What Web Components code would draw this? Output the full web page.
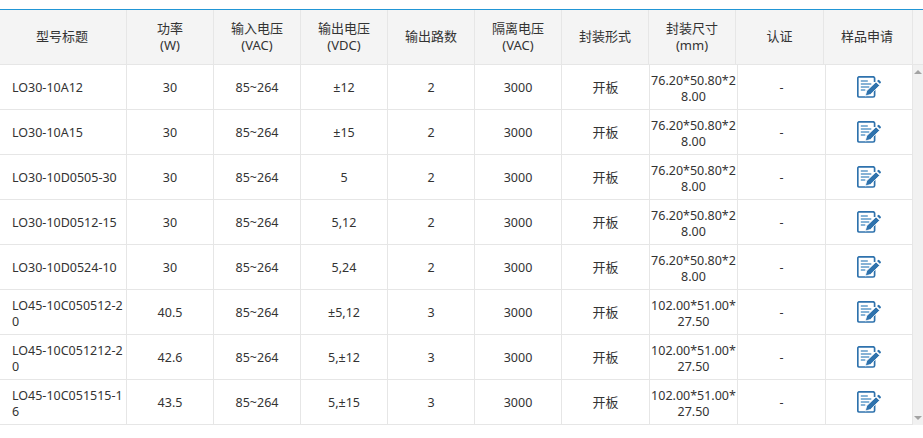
<!DOCTYPE html>
<html lang="zh"><head><meta charset="utf-8">
<style>
html,body{margin:0;padding:0;background:#fff;overflow:hidden}
body{font:13px/1.4 "Noto Sans","Noto Sans CJK SC",sans-serif;color:#333}
</style></head><body>
<spec-table></spec-table>
<script>
const HEAD=[["型号标题"],["功率","(W)"],["输入电压","(VAC)"],["输出电压","(VDC)"],["输出路数"],["隔离电压","(VAC)"],["封装形式"],["封装尺寸","(mm)"],["认证"],["样品申请"]];
const A="76.20*50.80*28.00",B="102.00*51.00*27.50";
const ROWS=[
["LO30-10A12","30","85~264","±12","2","3000","开板",A],
["LO30-10A15","30","85~264","±15","2","3000","开板",A],
["LO30-10D0505-30","30","85~264","5","2","3000","开板",A],
["LO30-10D0512-15","30","85~264","5,12","2","3000","开板",A],
["LO30-10D0524-10","30","85~264","5,24","2","3000","开板",A],
["LO45-10C050512-20","40.5","85~264","±5,12","3","3000","开板",B],
["LO45-10C051212-20","42.6","85~264","5,±12","3","3000","开板",B],
["LO45-10C051515-16","43.5","85~264","5,±15","3","3000","开板",B]];
class EditIcon extends HTMLElement{constructor(){super();this.attachShadow({mode:"open"}).innerHTML=`<style>:host{display:block;width:24px;height:22px}svg{display:block}</style>
<svg width="24" height="22" viewBox="0 0 24 22" fill="none">
<path d="M17.6 12.5V19.5a1.5 1.5 0 0 1-1.5 1.5H2.3a1.5 1.5 0 0 1-1.5-1.5V2.3A1.5 1.5 0 0 1 2.3.8h13.8a1.5 1.5 0 0 1 1.5 1.5V6" stroke="#2e72ad" stroke-width="1.7"/>
<path d="M3.8 5h7M3.8 8h10.5M3.8 11h8.5M3.8 14h4.5" stroke="#5f9ac9" stroke-width="1.3"/>
<path d="M8.3 20l1.4-5.2L19 5.9l3.7 3.5-9.3 9.1z" fill="#2e72ad" stroke="#fff" stroke-width=".8"/>
<path d="M20 5l.9-.8a1.1 1.1 0 0 1 1.5 0l1.2 1.2a1.1 1.1 0 0 1 0 1.5l-.8.8z" fill="#2e72ad"/>
</svg>`}}
customElements.define("edit-icon",EditIcon);
class SpecCell extends HTMLElement{constructor(){super();this.attachShadow({mode:"open"}).innerHTML=`<style>:host{display:flex;box-sizing:border-box;align-items:center;justify-content:center;text-align:center;border-right:1px solid #e6e6e6;padding:1px 0 0;min-width:0;word-break:break-all;line-height:17px;font-size:12.5px}
:host([two]){padding-top:3px;line-height:16px}
:host([first]){justify-content:flex-start;text-align:left;padding-left:12px}
:host([head]){background:#f4f4f4;font-size:13px;padding:0 0 2px;line-height:17px}
:host([head][two]){padding:0 0 1px;line-height:17px}
:host([shift]){padding-right:2px}
:host([cjk]){font-size:13px}
:host([icon]){padding:0}
:host([nb]){border-right:0}</style><div><slot></slot></div>`}}
customElements.define("spec-cell",SpecCell);
class SpecTable extends HTMLElement{constructor(){super();const r=this.attachShadow({mode:"open"});
const bw="127px 87px 87px 87px 87px 87px 88px 88px 88px 87px";
let h=HEAD.map((c,i)=>`<spec-cell head ${c.length>1?"two":""} ${i==0||i==9?"shift":""}>${c.join("<br>")}</spec-cell>`).join("")+`<spec-cell head nb></spec-cell>`;
let b=ROWS.map(row=>`<div class="row">`+row.map((c,i)=>`<spec-cell ${i==0?"first":i==6?"cjk":""} ${i==7||(i==0&&c.length>15)?"two":""}>${c}</spec-cell>`).join("")+`<spec-cell>-</spec-cell><spec-cell icon><edit-icon></edit-icon></spec-cell></div>`).join("");
r.innerHTML=`<style>:host{display:block;margin-top:9px;border-top:1px solid #2196d6}
.head{display:grid;grid-template-columns:127px 87px 87px 87px 87px 87px 87px 87px 88px 89px 1fr;height:55px;border-bottom:1px solid #e6e6e6;box-sizing:border-box}
.wrap{display:flex}
.rows{width:913px}
.row{display:grid;grid-template-columns:${bw};height:45px;border-bottom:1px solid #e6e6e6;box-sizing:border-box}
.bar{width:10px;background:#f1f1f1;display:flex;flex-direction:column;justify-content:space-between;align-items:center;padding:5px 0;box-sizing:border-box}
.up,.dn{width:0;height:0;border:4px solid transparent}
.up{border-top:0;border-bottom-color:#a3a3a3}.dn{border-bottom:0;border-top-color:#a3a3a3}
</style><div class="head">${h}</div><div class="wrap"><div class="rows">${b}</div><div class="bar"><i class="up"></i><i class="dn"></i></div></div>`}}
customElements.define("spec-table",SpecTable);
</script></body></html>
